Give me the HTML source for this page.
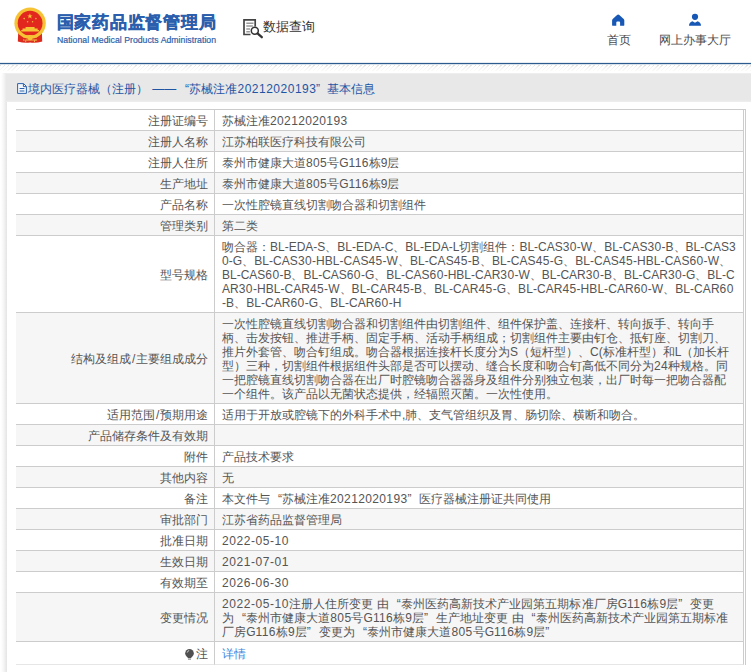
<!DOCTYPE html>
<html><head><meta charset="utf-8">
<style>
*{margin:0;padding:0;box-sizing:border-box;}
html,body{width:751px;height:672px;overflow:hidden;background:#fff;}
body{font-family:"Liberation Sans",sans-serif;font-size:12px;color:#444;position:relative;}
.hdr{position:absolute;left:0;top:0;width:751px;height:63px;background:#fff;}
.line{position:absolute;left:0;top:62px;width:751px;height:3px;background:linear-gradient(180deg,rgba(44,92,143,.12) 0,rgba(44,92,143,.12) 1px,#2c5c8f 1px,#2c5c8f 2px,rgba(44,92,143,.18) 2px,rgba(44,92,143,.18) 3px);}
.hatch{position:absolute;left:0;top:65px;width:751px;height:6px;background:repeating-linear-gradient(135deg,#dadada 0,#dadada 1px,#fff 1px,#fff 3px);-webkit-mask-image:linear-gradient(180deg,rgba(0,0,0,.9) 0,rgba(0,0,0,.35) 2px,rgba(0,0,0,.12) 6px);mask-image:linear-gradient(180deg,rgba(0,0,0,.9) 0,rgba(0,0,0,.35) 2px,rgba(0,0,0,.12) 6px);}
.title{position:absolute;left:56.5px;top:13.3px;font-size:17px;letter-spacing:.8px;font-weight:bold;color:#2b5fad;-webkit-text-stroke:.35px #2b5fad;white-space:nowrap;line-height:20px;}
.sub{position:absolute;left:57px;top:34.6px;font-size:8.7px;letter-spacing:0.03px;color:#2f5fa9;-webkit-text-stroke:.2px #2f5fa9;white-space:nowrap;line-height:11px;}
.query{position:absolute;left:263px;top:18px;font-size:13px;color:#333;white-space:nowrap;line-height:18px;}
.nav{position:absolute;top:31.5px;font-size:12px;color:#4a4a4a;white-space:nowrap;line-height:16px;text-align:center;}
.shadow{position:absolute;left:1px;top:73px;width:6px;height:599px;background:linear-gradient(90deg,#fff,#f4f4f4 50%,#e4e4e4);}
.panelhd{position:absolute;left:6px;top:73px;width:745px;height:29px;background:linear-gradient(180deg,#f1f1f1 0,#e8e8e8 1.5px,#e8e8e8 27px,#efefef 29px);}
.ptitle{position:absolute;left:27.5px;top:80.7px;font-size:12px;color:#1f55a5;white-space:nowrap;line-height:16px;}
.wrap{position:absolute;left:16px;top:109px;width:730px;border-top:1px solid #ccc;border-right:1px solid #ccc;padding-right:1px;}
table{border-collapse:separate;border-spacing:0;width:728px;table-layout:fixed;}
td{border-bottom:1px solid #ccc;border-right:1px solid #ccc;padding:4px 6px 2px 7px;line-height:14px;font-size:12px;color:#555;vertical-align:middle;white-space:nowrap;}
td.l{width:199px;text-align:right;padding-right:6px;}
td.v{width:529px;text-align:left;}
tr.g td{background:#f6f6f6;}
tr.last td{border-bottom-color:#e6e6e6;padding-top:5px;padding-bottom:3px;}
.n{letter-spacing:0.37px;}
.q1{display:inline-block;width:12px;text-align:right;}
.q2{display:inline-block;width:12px;text-align:left;}
a{color:#3e86e0;text-decoration:none;}
</style></head><body>
<div class="hdr">
<svg style="position:absolute;left:0;top:0" width="60" height="54" viewBox="0 0 60 54">
<path d="M18.2 33 L17.8 41.6 Q24 43.4 30.1 42.6 Q36 43.4 42.2 41.6 L41.9 33 Z" fill="#dc2a1f"/>
<circle cx="30.1" cy="23.2" r="15.7" fill="#f6c335"/>
<circle cx="30.1" cy="23.2" r="12.4" fill="#e2281e"/>
<path d="M21.2 30 h17.8 v1.6 h-17.8z M22.5 28.6 h15.2 v1.4 h-15.2z M25.6 27 h9 v1.6 h-9z" fill="#f6c335"/>
<path d="M29.9 13.6 l.75 1.8 h1.9 l-1.5 1.2 .55 1.9 -1.7-1.15 -1.7 1.15 .55-1.9 -1.5-1.2 h1.9z" fill="#f6c335"/>
<circle cx="24.2" cy="18.6" r=".8" fill="#f2b53a"/><circle cx="35.9" cy="18.6" r=".8" fill="#f2b53a"/><circle cx="27.6" cy="21.8" r=".8" fill="#f2b53a"/><circle cx="32.6" cy="21.8" r=".8" fill="#f2b53a"/>
<path d="M22.5 36.4 Q30.1 33.6 37.7 36.4 L36.8 37.4 Q30.1 35.4 23.4 37.4Z" fill="#f6c335"/>
<path d="M23 39.6 h14.2 v.9 h-14.2z M24.4 39.6 l1.2 2.6 h.9 l-1.2 -2.6z M35.8 39.6 l-1.2 2.6 h-.9 l1.2 -2.6z" fill="#f3c04a"/>
<ellipse cx="30.1" cy="38.6" rx="2.4" ry="1.6" fill="#f6c335"/>
</svg>
<div class="title">国家药品监督管理局</div>
<div class="sub">National Medical Products Administration</div>
<svg style="position:absolute;left:240px;top:15px" width="26" height="26" viewBox="240 15 26 26" fill="none">
<path d="M250.5 34.5 H244 V19.9 H255.2 V26.6" stroke="#444" stroke-width="1.7"/>
<path d="M246.3 23.2h7.2M246.3 26h6.6M246.3 28.9h3.8M246.3 31.8h3.6" stroke="#9a9a9a" stroke-width="1.5"/>
<circle cx="254.8" cy="30.8" r="3.5" stroke="#333" stroke-width="1.5" fill="#fff"/><path d="M257.5 33.4 L261.8 37.2" stroke="#333" stroke-width="2.3" stroke-linecap="round"/>
</svg>
<div class="query">数据查询</div>
<svg style="position:absolute;left:608px;top:10px" width="20" height="20" viewBox="608 10 20 20"><path d="M618.2 14.4 Q618.8 14.4 619.3 14.9 L623.7 18.9 Q624.3 19.5 624.3 20.3 V24.9 Q624.3 25.8 623.4 25.8 H620.1 V22.6 Q620.1 21.6 619.1 21.6 H617.3 Q616.3 21.6 616.3 22.6 V25.8 H613 Q612.1 25.8 612.1 24.9 V20.3 Q612.1 19.5 612.7 18.9 L617.1 14.9 Q617.6 14.4 618.2 14.4Z" fill="#1757b5"/></svg>
<div class="nav" style="left:588.6px;width:60px;">首页</div>
<svg style="position:absolute;left:685px;top:10px" width="20" height="20" viewBox="685 10 20 20"><circle cx="695" cy="16.8" r="3.1" fill="#1757b5"/><path d="M689 25.8 Q689 22.3 692.4 21.2 L695 22.8 L697.6 21.2 Q701 22.3 701 25.8Z" fill="#1757b5"/></svg>
<div class="nav" style="left:654.5px;width:80px;">网上办事大厅</div>
</div>
<div class="line"></div><div class="hatch"></div>
<div class="shadow"></div>
<div class="panelhd"></div>
<svg style="position:absolute;left:15px;top:80px" width="14" height="16" viewBox="15 80 14 16" fill="none" stroke="#2a62ad" stroke-width="1"><path d="M17.6 83.6 H23.6 L26.4 86.4 V93.4 H17.6Z" fill="#f4f8fd"/><path d="M23.4 83.8V86.6H26.2M19.6 88.5h4.8M19.6 91h4.8"/></svg>
<div class="ptitle">境内医疗器械（注册）<span style="margin-left:4.8px">——</span><span style="margin-left:8.7px;margin-right:0.5px">“</span>苏械注准<span style="letter-spacing:0.5px">20212020193</span><span style="margin-left:-0.3px;margin-right:7.3px">”</span>基本信息</div>
<div class="wrap"><table>
<tr><td class="l">注册证编号</td><td class="v">苏械注准<span class="n">20212020193</span></td></tr>
<tr class="g"><td class="l">注册人名称</td><td class="v">江苏柏联医疗科技有限公司</td></tr>
<tr><td class="l">注册人住所</td><td class="v">泰州市健康大道<span class="n">805</span>号G<span class="n">116</span>栋9层</td></tr>
<tr class="g"><td class="l">生产地址</td><td class="v">泰州市健康大道<span class="n">805</span>号G<span class="n">116</span>栋9层</td></tr>
<tr><td class="l">产品名称</td><td class="v">一次性腔镜直线切割吻合器和切割组件</td></tr>
<tr class="g"><td class="l">管理类别</td><td class="v">第二类</td></tr>
<tr><td class="l">型号规格</td><td class="v">吻合器：BL-EDA-S、BL-EDA-C、BL-EDA-L切割组件：BL-CAS<span class="n">30</span>-W、BL-CAS<span class="n">30</span>-B、BL-CAS3<br><span style="letter-spacing:0.055px">0-G、BL-CAS<span class="n">30</span>-HBL-CAS<span class="n">45</span>-W、BL-CAS<span class="n">45</span>-B、BL-CAS<span class="n">45</span>-G、BL-CAS<span class="n">45</span>-HBL-CAS<span class="n">60</span>-W、</span><br>BL-CAS<span class="n">60</span>-B、BL-CAS<span class="n">60</span>-G、BL-CAS<span class="n">60</span>-HBL-CAR<span class="n">30</span>-W、BL-CAR<span class="n">30</span>-B、BL-CAR<span class="n">30</span>-G、BL-C<br><span style="letter-spacing:0.055px">AR<span class="n">30</span>-HBL-CAR<span class="n">45</span>-W、BL-CAR<span class="n">45</span>-B、BL-CAR<span class="n">45</span>-G、BL-CAR<span class="n">45</span>-HBL-CAR<span class="n">60</span>-W、BL-CAR<span class="n">60</span></span><br><span style="letter-spacing:0.06px">-B、BL-CAR<span class="n">60</span>-G、BL-CAR<span class="n">60</span>-H</span></td></tr>
<tr class="g"><td class="l">结构及组成<span style="margin:0 .7px">/</span>主要组成成分</td><td class="v">一次性腔镜直线切割吻合器和切割组件由切割组件、组件保护盖、连接杆、转向扳手、转向手<br>柄、击发按钮、推进手柄、固定手柄、活动手柄组成；切割组件主要由钉仓、抵钉座、切割刀、<br>推片外套管、吻合钉组成。吻合器根据连接杆长度分为S（短杆型）、C(标准杆型）和L（加长杆<br>型）三种，切割组件根据组件头部是否可以摆动、缝合长度和吻合钉高低不同分为<span class="n">24</span>种规格。同<br>一把腔镜直线切割吻合器在出厂时腔镜吻合器器身及组件分别独立包装，出厂时每一把吻合器配<br>一个组件。该产品以无菌状态提供，经辐照灭菌。一次性使用。</td></tr>
<tr><td class="l">适用范围<span style="margin:0 .7px">/</span>预期用途</td><td class="v">适用于开放或腔镜下的外科手术中,肺、支气管组织及胃、肠切除、横断和吻合。</td></tr>
<tr class="g"><td class="l">产品储存条件及有效期</td><td class="v"></td></tr>
<tr><td class="l">附件</td><td class="v">产品技术要求</td></tr>
<tr class="g"><td class="l">其他内容</td><td class="v">无</td></tr>
<tr><td class="l">备注</td><td class="v">本文件与<span class="q1">“</span>苏械注准<span class="n">20212020193</span><span class="q2">”</span>医疗器械注册证共同使用</td></tr>
<tr class="g"><td class="l">审批部门</td><td class="v">江苏省药品监督管理局</td></tr>
<tr><td class="l">批准日期</td><td class="v"><span style="letter-spacing:.56px">2022-05-10</span></td></tr>
<tr class="g"><td class="l">生效日期</td><td class="v"><span style="letter-spacing:.56px">2021-07-01</span></td></tr>
<tr><td class="l">有效期至</td><td class="v"><span style="letter-spacing:.56px">2026-06-30</span></td></tr>
<tr class="g"><td class="l">变更情况</td><td class="v"><span style="letter-spacing:0.05px"><span style="letter-spacing:.56px">2022-05-10</span>注册人住所变更 由<span class="q1">“</span>泰州医药高新技术产业园第五期标准厂房G<span class="n">116</span>栋9层<span class="q2">”</span>变更</span><br><span style="letter-spacing:0.04px">为<span class="q1">“</span>泰州市健康大道<span class="n">805</span>号G<span class="n">116</span>栋9层<span class="q2">”</span>生产地址变更 由<span class="q1">“</span>泰州医药高新技术产业园第五期标准</span><br><span style="letter-spacing:0.075px">厂房G<span class="n">116</span>栋9层<span class="q2">”</span>变更为<span class="q1">“</span>泰州市健康大道<span class="n">805</span>号G<span class="n">116</span>栋9层<span class="q2">”</span></span></td></tr>
<tr class="last"><td class="l" style="padding-right:6.2px"><svg style="vertical-align:-1.5px;margin-right:2.2px" width="9" height="11" viewBox="0 0 9 11"><circle cx="4.5" cy="4.3" r="4.3" fill="#505050"/><path d="M2.6 7.5h3.8v1.6h-3.8z" fill="#505050"/><path d="M3 9.6h3v1h-3z" fill="#777"/><path d="M2.2 3.6 a2.6 2.6 0 0 1 2 -2.1" stroke="#d8d8d8" stroke-width="0.9" fill="none"/></svg>注</td><td class="v"><a>详情</a></td></tr>
</table></div>
</body></html>
